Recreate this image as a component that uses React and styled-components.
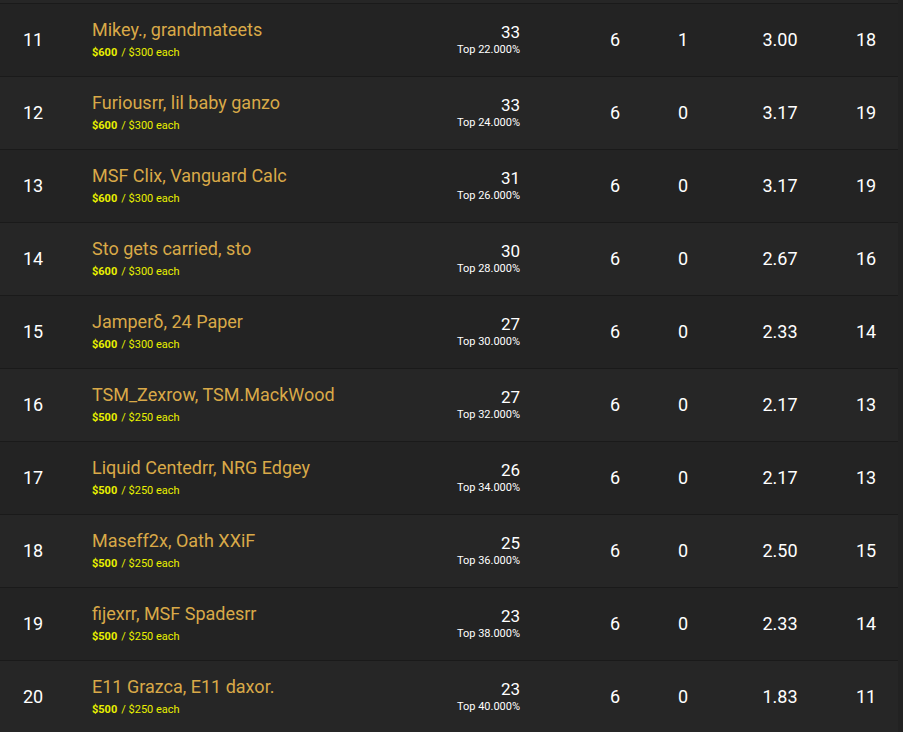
import React from 'react';
import styled, { createGlobalStyle } from 'styled-components';

const GlobalStyle = createGlobalStyle`
  html, body {
    margin: 0;
    padding: 0;
    background: #262626;
  }
  body {
    font-family: Roboto, "Noto Sans", "Liberation Sans", sans-serif;
    color: #ffffff;
    overflow: hidden;
  }
`;

const rows = [
  { rank: 11, team: 'Mikey., grandmateets', total: '$600', each: '$300', pts: 33, top: '22.000%', m: 6, w: 1, avg: '3.00', e: 18 },
  { rank: 12, team: 'Furiousrr, lil baby ganzo', total: '$600', each: '$300', pts: 33, top: '24.000%', m: 6, w: 0, avg: '3.17', e: 19 },
  { rank: 13, team: 'MSF Clix, Vanguard Calc', total: '$600', each: '$300', pts: 31, top: '26.000%', m: 6, w: 0, avg: '3.17', e: 19 },
  { rank: 14, team: 'Sto gets carried, sto', total: '$600', each: '$300', pts: 30, top: '28.000%', m: 6, w: 0, avg: '2.67', e: 16 },
  { rank: 15, team: 'Jamperδ, 24 Paper', total: '$600', each: '$300', pts: 27, top: '30.000%', m: 6, w: 0, avg: '2.33', e: 14 },
  { rank: 16, team: 'TSM_Zexrow, TSM.MackWood', total: '$500', each: '$250', pts: 27, top: '32.000%', m: 6, w: 0, avg: '2.17', e: 13 },
  { rank: 17, team: 'Liquid Centedrr, NRG Edgey', total: '$500', each: '$250', pts: 26, top: '34.000%', m: 6, w: 0, avg: '2.17', e: 13 },
  { rank: 18, team: 'Maseff2x, Oath XXiF', total: '$500', each: '$250', pts: 25, top: '36.000%', m: 6, w: 0, avg: '2.50', e: 15 },
  { rank: 19, team: 'fijexrr, MSF Spadesrr', total: '$500', each: '$250', pts: 23, top: '38.000%', m: 6, w: 0, avg: '2.33', e: 14 },
  { rank: 20, team: 'E11 Grazca, E11 daxor.', total: '$500', each: '$250', pts: 23, top: '40.000%', m: 6, w: 0, avg: '1.83', e: 11 },
];

const Board = styled.div`
  padding-top: 3px;
  border-right: 5px solid #222222;
`;

const Row = styled.div`
  display: grid;
  grid-template-columns: 66px 334px 175px 80px 56px 138px 34px 1fr;
  align-items: center;
  box-sizing: border-box;
  height: 73px;
  padding-bottom: 2px;
  border-top: 1px solid #1a1a1a;
  background: ${p => (p.$odd ? '#232323' : '#262626')};
`;

const Rank = styled.div`
  text-align: center;
  font-size: 18px;
  font-weight: 400;
`;

const TeamCell = styled.div`
  padding-left: 26px;
`;

const TeamName = styled.div`
  color: #d9a948;
  font-size: 18px;
  line-height: 22px;
`;

const Prize = styled.div`
  margin-top: 5px;
  font-size: 11px;
  line-height: 14px;
  color: #e8f000;
`;

const PrizeTotal = styled.b`
  font-weight: 700;
  margin-right: 4px;
`;

const ScoreCell = styled.div`
  text-align: right;
  padding-right: 55px;
`;

const Points = styled.div`
  font-size: 17px;
  line-height: 20px;
  font-weight: 400;
`;

const TopPct = styled.div`
  font-size: 11px;
  line-height: 13px;
  font-weight: 400;
  margin-top: 1px;
`;

const Stat = styled.div`
  text-align: center;
  font-size: 18px;
  font-weight: 400;
`;

export default function App() {
  return (
    <>
      <GlobalStyle />
      <Board>
        {rows.map(r => (
          <Row key={r.rank} $odd={r.rank % 2 === 1}>
            <Rank>{r.rank}</Rank>
            <TeamCell>
              <TeamName>{r.team}</TeamName>
              <Prize>
                <PrizeTotal>{r.total}</PrizeTotal>/ {r.each} each
              </Prize>
            </TeamCell>
            <ScoreCell>
              <Points>{r.pts}</Points>
              <TopPct>Top {r.top}</TopPct>
            </ScoreCell>
            <Stat>{r.m}</Stat>
            <Stat>{r.w}</Stat>
            <Stat>{r.avg}</Stat>
            <Stat>{r.e}</Stat>
            <div />
          </Row>
        ))}
      </Board>
    </>
  );
}
